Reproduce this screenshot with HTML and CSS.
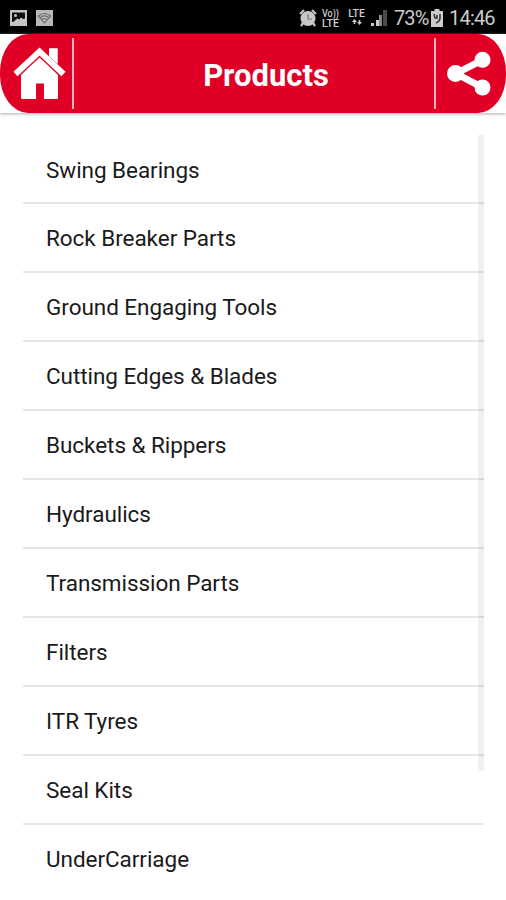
FILE: index.html
```
<!DOCTYPE html>
<html lang="en">
<head>
  <meta charset="utf-8">
  <title>Products</title>
  <link rel="stylesheet" href="styles.css">
</head>
<body>
  <div class="statusbar">
    <svg class="picture" width="17" height="16" viewBox="0 0 17 16">
      <rect width="17" height="16" fill="#c4c4c4"/>
      <path d="M2 2.500h13v6l-2 .5-2-1.500-2 2-2-1-3 3-2 .5z" fill="#111"/>
      <circle cx="5.500" cy="5.500" r="1.500" fill="#c4c4c4"/>
    </svg>
    <svg class="wifi" width="17" height="16" viewBox="0 0 17 16">
      <rect width="17" height="16" fill="#b8b8b8"/>
      <path d="M2.500 6q6-5 12 0l-6 7zM4.500 7.500q4-3.500 8 0M6.500 9.500q2-2 4 0" fill="none" stroke="#666" stroke-width="1.100"/>
    </svg>
    <span class="space"></span>
    <svg class="alarm" width="18" height="18" viewBox="0 0 18 18">
      <path d="M1 5l4-4M17 5l-4-4M4 14l-2 3M14 14l2 3" stroke="#bbb" stroke-width="2.400"/>
      <circle cx="9" cy="9.500" r="7.500" fill="#c8c8c8"/>
      <path d="M9 5v5h4" fill="none" stroke="#777" stroke-width="1.200"/>
    </svg>
    <svg class="volte" width="18" height="18" viewBox="0 0 18 18">
      <text x="0" y="7.500" textLength="17" lengthAdjust="spacingAndGlyphs">Vo))</text>
      <text x="0" y="17.500" textLength="17" lengthAdjust="spacingAndGlyphs">LTE</text>
    </svg>
    <div class="lte">
      <span>LTE</span>
      <svg width="10" height="6" viewBox="0 0 10 6"><path d="M0 3l2.500-3L5 3H3.300v2H1.700V3zM5 3h1.700V1h1.600v2H10L7.500 6z" fill="#ccc"/></svg>
    </div>
    <svg class="signal" width="17" height="18" viewBox="0 0 17 18">
      <path d="M0 14h3v3H0zM5 11h3v6H5z" fill="#ccc"/>
      <path d="M8 6h3v11H8z" fill="#888"/>
      <path d="M12 1h4v16h-4z" fill="#4a4a4a"/>
    </svg>
    <span class="percent">73%</span>
    <svg class="battery" width="12" height="18" viewBox="0 0 12 18">
      <path d="M3.500 0h5v2H12v16H0V2h3.500z" fill="#ccc"/>
      <path d="M3 5l1 4h2V6M9 5v4q0 3-4 5" fill="none" stroke="#333" stroke-width="1.500"/>
    </svg>
    <span class="time">14:46</span>
  </div>

  <div class="toolbar">
    <div class="header">
      <a class="home">
        <svg width="53" height="53" viewBox="0 0 53 53">
          <path d="M36 14V1.500h8.500V22zM8 28L26.500 9 45 28v22.500q0 1.500-1.500 1.500H31V36.500h-8V52H9.500Q8 52 8 50.500z" fill="#fff"/>
          <path d="M1.500 28.500L26.500 5.500l25 23" fill="none" stroke="#e00025" stroke-width="7.500"/>
          <path d="M2.500 27L26.500 4.500l24 22.500" fill="none" stroke="#fff" stroke-width="6"/>
          <path d="M36.500 8V1.500h8V16z" fill="#fff"/>
        </svg>
      </a>
      <h1>Products</h1>
      <a class="share">
        <svg width="44" height="46" viewBox="0 0 44 46">
          <path d="M35.500 9L9 22.500 35.500 36.500" fill="none" stroke="#fff" stroke-width="7"/>
          <circle cx="35.500" cy="8.800" r="8" fill="#fff"/>
          <circle cx="8.500" cy="22.500" r="8.500" fill="#fff"/>
          <circle cx="35.500" cy="36.500" r="8" fill="#fff"/>
        </svg>
      </a>
    </div>
  </div>

  <div class="content">
    <ul class="list">
      <li>Swing Bearings</li>
      <li>Rock Breaker Parts</li>
      <li>Ground Engaging Tools</li>
      <li>Cutting Edges &amp; Blades</li>
      <li>Buckets &amp; Rippers</li>
      <li>Hydraulics</li>
      <li>Transmission Parts</li>
      <li>Filters</li>
      <li>ITR Tyres</li>
      <li>Seal Kits</li>
      <li>UnderCarriage</li>
    </ul>
    <div class="scrollbar"></div>
  </div>
</body>
</html>
```

FILE: styles.css
```
* {
  box-sizing: border-box;
}

body {
  margin: 0;
  height: 900px;
  overflow: hidden;
  background: #fff;
  font-family: Roboto, sans-serif;
  color: #1a1a1a;
}

.statusbar {
  display: flex;
  align-items: center;
  height: 34px;
  padding: 1px 11px 0 10px;
  background: #000;
  color: #ccc;
}

.wifi {
  margin-left: 9px;
}

.space {
  flex: 1;
}

.volte {
  margin-left: 5px;
  fill: #ccc;
  font-size: 10px;
  font-weight: 500;
}

.lte {
  display: flex;
  flex-direction: column;
  align-items: center;
  width: 19px;
  height: 18px;
  margin-left: 7px;
  font-size: 10.5px;
  font-weight: 500;
  line-height: 10px;
}

.signal {
  margin-left: 5px;
}

.percent {
  width: 34px;
  margin-left: 6px;
  font-size: 20px;
  letter-spacing: -0.9px;
}

.battery {
  margin-left: 3px;
}

.time {
  width: 46px;
  margin-left: 6px;
  font-size: 20px;
  letter-spacing: -0.8px;
}

.toolbar {
  background: #fff;
  box-shadow: 0 1px 3px #aaa;
}

.header {
  display: flex;
  align-items: center;
  height: 79px;
  background: #e00025;
  border-radius: 28px / 38px;
}

.home,
.share {
  display: flex;
  align-items: center;
  height: 71px;
}

.home {
  width: 74px;
  padding-left: 13px;
  border-right: 2px solid #ffb3bd;
}

.share {
  width: 72px;
  padding-left: 11px;
  border-left: 2px solid #ffb3bd;
}

.header h1 {
  flex: 1;
  margin: 0;
  padding: 4px 0 0 24px;
  text-align: center;
  font-size: 31px;
  font-weight: 700;
  line-height: 40px;
  color: #fff;
}

.content {
  position: relative;
  padding: 22.5px 22px 0 23px;
}

.list {
  margin: 0;
  padding: 0;
  list-style: none;
}

.list li {
  height: 68.95px;
  padding-left: 23px;
  border-bottom: 2px solid #e6e6e6;
  font-size: 22.5px;
  line-height: 69px;
  letter-spacing: -0.05px;
}

.list li:last-child {
  border-bottom: none;
}

.scrollbar {
  position: absolute;
  top: 22px;
  right: 22px;
  width: 6px;
  height: 636px;
  background: rgba(0, 0, 0, 0.06);
}
```
